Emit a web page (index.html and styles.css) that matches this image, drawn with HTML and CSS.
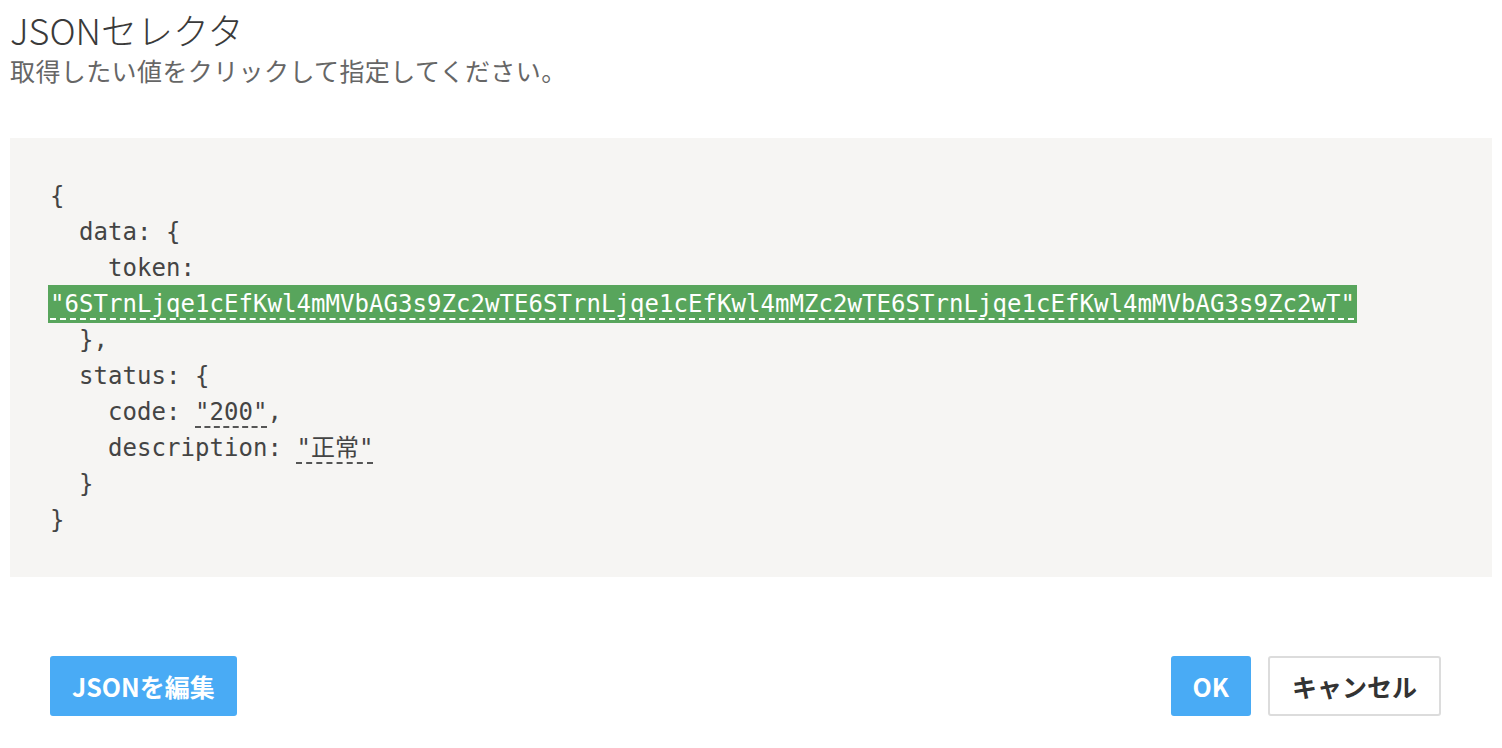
FILE: index.html
```html
<!DOCTYPE html>
<html lang="ja">
<head>
<meta charset="utf-8">
<title>JSONセレクタ</title>
<link rel="stylesheet" href="styles.css">
</head>
<body>
<div class="dialog">
  <header class="header">
    <h1 class="title">JSONセレクタ</h1>
    <p class="subtitle">取得したい値をクリックして指定してください。</p>
  </header>
  <pre class="json">{
  data: {
    token: <span class="val selected">"6STrnLjqe1cEfKwl4mMVbAG3s9Zc2wTE6STrnLjqe1cEfKwl4mMZc2wTE6STrnLjqe1cEfKwl4mMVbAG3s9Zc2wT"</span>
  },
  status: {
    code: <span class="val">"200"</span>,
    description: <span class="val">"正常"</span>
  }
}</pre>
  <footer class="footer">
    <button class="btn btn-primary">JSONを編集</button>
    <div class="actions">
      <button class="btn btn-primary">OK</button>
      <button class="btn btn-default">キャンセル</button>
    </div>
  </footer>
</div>
</body>
</html>
```

FILE: styles.css
```css
* { box-sizing: border-box; }
html, body { margin: 0; padding: 0; background: #fff; }
body {
  font-family: "Noto Sans CJK JP", "Noto Sans", sans-serif;
  color: #333;
}
.dialog { padding: 10px; }
.header { display: flex; flex-direction: column; gap: 6px; }
.title {
  margin: 0;
  font-size: 36px;
  font-weight: 300;
  line-height: 38px;
  color: #3a3a3a;
}
.subtitle {
  margin: 0;
  font-size: 25px;
  letter-spacing: 0.4px;
  line-height: 32px;
  color: #666;
}
.json {
  margin: 52px 0 0;
  background: #f6f5f3;
  padding: 40px 40px 37px;
  font-family: "DejaVu Sans Mono", "Noto Sans CJK JP", monospace;
  font-size: 24px;
  letter-spacing: 0.05px;
  line-height: 36px;
  color: #444;
  white-space: pre-wrap;
  min-height: 439px;
}
.val {
  text-decoration: underline dashed;
  text-decoration-color: #555;
  text-underline-offset: 6px;
  text-decoration-thickness: 2px;
  cursor: pointer;
}
.selected {
  background: #58a55c;
  color: #fff;
  text-decoration-color: #fff;
  padding: 5px 2px 5px;
  margin-left: -2px;
}
.footer {
  margin-top: 79px;
  padding: 0 40px 0 40px;
  display: flex;
  justify-content: space-between;
  align-items: center;
}
.actions { display: flex; gap: 17px; margin-right: 11px; }
.btn {
  height: 60px;
  padding: 0 20px;
  font-family: "Noto Sans CJK JP", "Noto Sans", sans-serif;
  font-size: 25px;
  font-weight: 700;
  border-radius: 3px;
  border: 2px solid transparent;
  cursor: pointer;
}
.btn-primary { background: #49abf5; color: #fff; border-color: #49abf5; }
.btn-default { background: #fff; color: #333; border-color: #dcdcdc; padding: 0 22px; }
```
